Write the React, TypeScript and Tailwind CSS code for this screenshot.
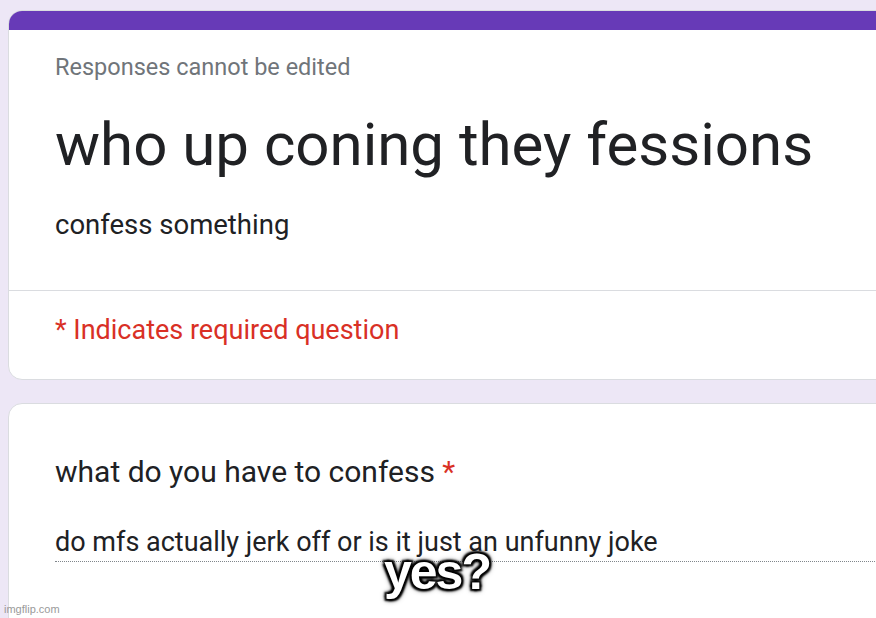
import React from "react";

export default function App() {
  return (
    <div
      className="relative w-[876px] h-[618px] overflow-hidden bg-[#ede7f6] pl-[8px] pt-[10px]"
      style={{ fontFamily: "Roboto, 'Liberation Sans', sans-serif" }}
    >
      <div className="w-[900px] h-[370px] rounded-[14px] bg-white border border-[#dadce0] overflow-hidden flex flex-col">
        <div className="h-[19px] bg-[#673ab7] shrink-0" />
        <div className="pl-[46px] pt-[22px] h-[260px] shrink-0">
          <div className="text-[23.5px] leading-[30px] text-[#70757a]">Responses cannot be edited</div>
          <div className="mt-[25px] text-[60px] leading-[76px] text-[#202124] whitespace-nowrap">who up coning they fessions</div>
          <div className="mt-[25px] text-[27.5px] leading-[34px] text-[#202124]">confess something</div>
        </div>
        <div className="border-t border-[#dadce0] pl-[46px] pt-[22px]">
          <div className="text-[27px] leading-[34px] text-[#d93025]">* Indicates required question</div>
        </div>
      </div>
      <div className="mt-[23px] w-[900px] h-[300px] rounded-[14px] bg-white border border-[#dadce0] pl-[46px] pt-[49px]">
        <div className="text-[30px] leading-[38px] text-[#202124]">
          what do you have to confess <span className="text-[#d93025]">*</span>
        </div>
        <div className="mt-[34px] w-[830px] border-b border-dotted border-[#80868b] text-[27px] leading-[34px] pb-[2px] text-[#202124] whitespace-nowrap">
          do mfs actually jerk off or is it just an unfunny joke
        </div>
      </div>
      <div
        className="absolute left-[384px] top-[540px] text-[50px] leading-[64px] font-bold text-white tracking-[-2px]"
        style={{
          fontFamily: "'Liberation Sans', Arial, sans-serif",
          textShadow:
            "2px 2px 2px #000, -2px -2px 2px #000, 2px -2px 2px #000, -2px 2px 2px #000, 0 0 4px #000, 0 0 6px #000",
        }}
      >
        yes?
      </div>
      <div
        className="absolute left-[4px] top-[603px] text-[11px] leading-[13px] text-[#9a9a9a]"
        style={{ fontFamily: "'Liberation Sans', Arial, sans-serif" }}
      >
        imgflip.com
      </div>
    </div>
  );
}
